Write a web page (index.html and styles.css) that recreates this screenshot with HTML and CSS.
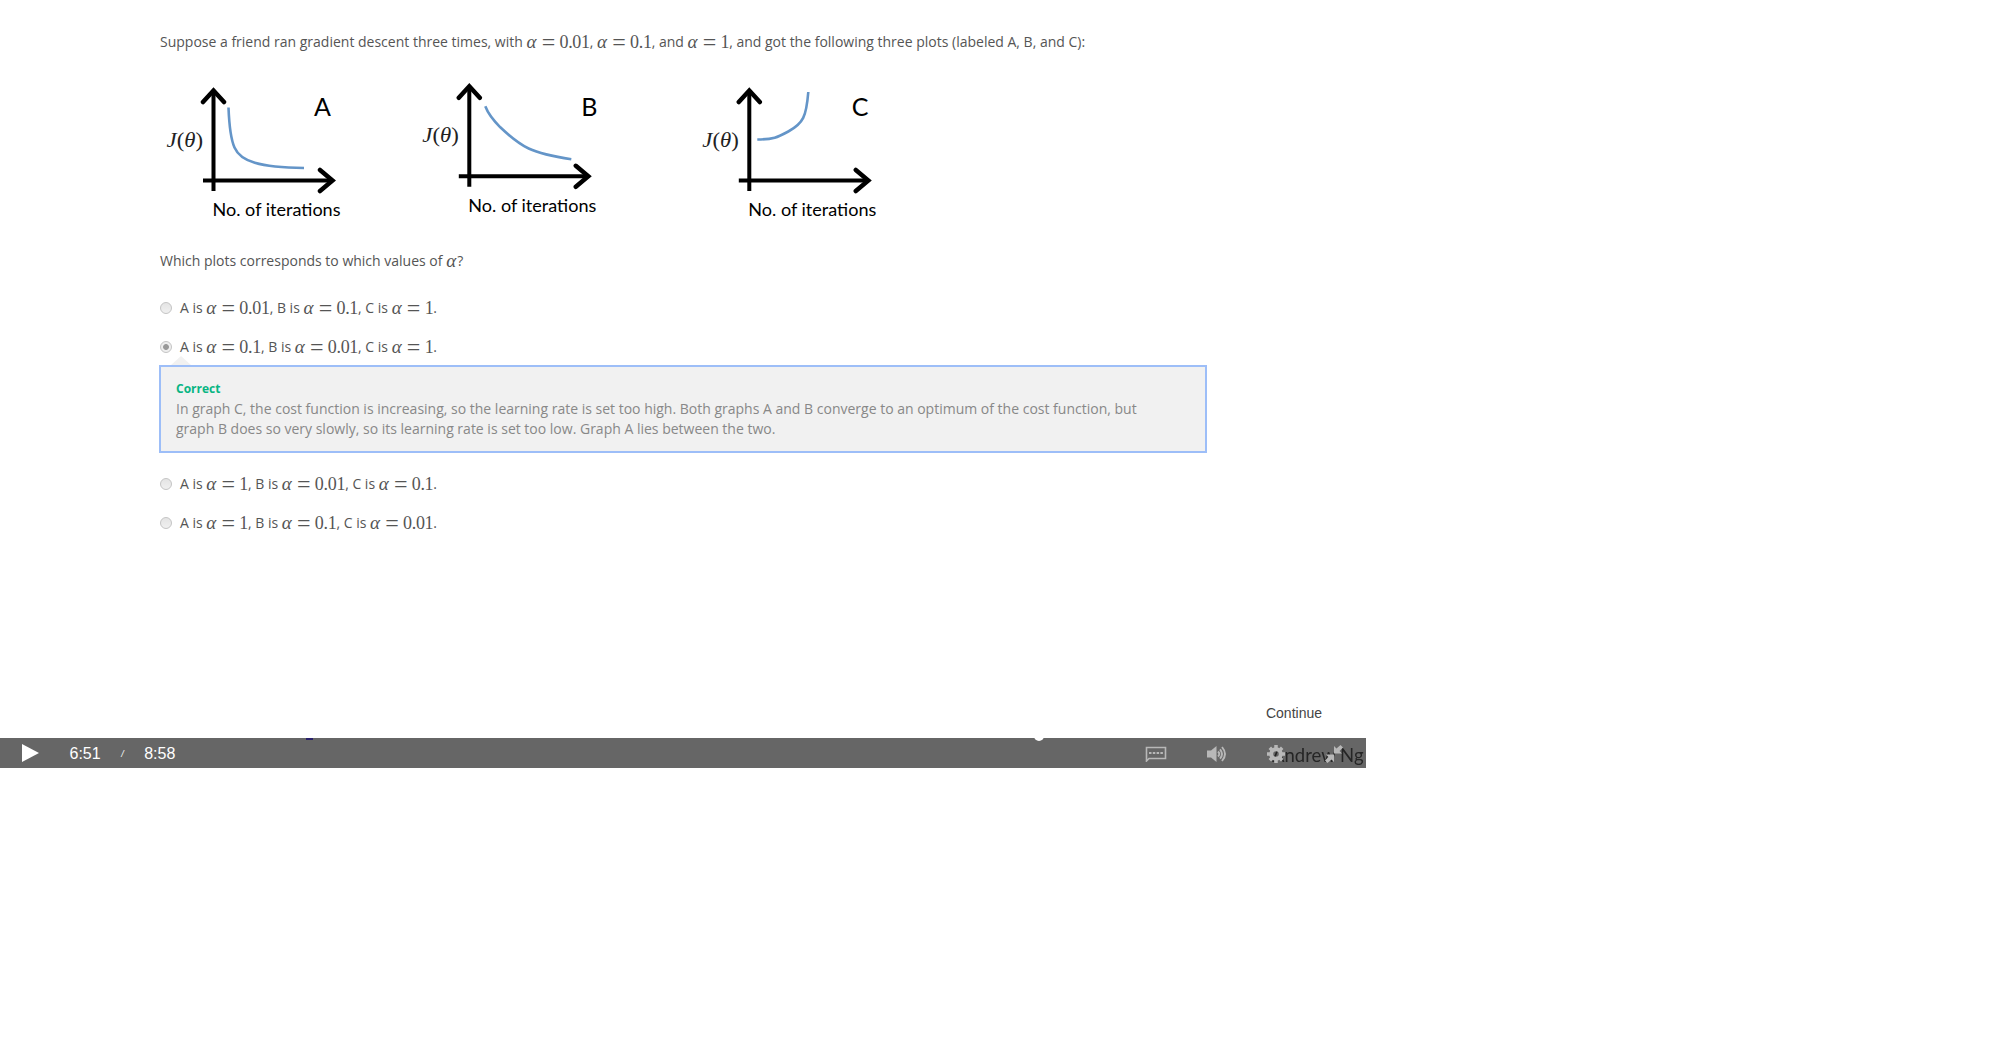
FILE: index.html
```html
<!DOCTYPE html>
<html lang="en">
<head>
<meta charset="utf-8">
<title>Gradient descent quiz</title>
<link rel="stylesheet" href="styles.css">
</head>
<body>
<main class="player">
  <section class="quiz">
    <p class="prompt"><span class="lead">Suppose a friend ran gradient descent three times, with </span><span class="math"><i>α</i><b>=</b><span>0.01</span></span>, <span class="math"><i>α</i><b>=</b><span>0.1</span></span>, and <span class="math"><i>α</i><b>=</b><span>1</span></span>, and got the following three plots (labeled A, B, and C):</p>

    <div class="plots">
      <svg width="240" height="145" viewBox="-53.5 -100.5 240 145">
        <defs>
          <g id="axes">
            <path class="axis" d="M0 10.5V-89M-10.5 0H118"/>
            <path class="axis tip" d="M-10.5 -78.5L0 -90L10.5 -78.5M106.5 -10.5L119 0L106.5 10.5"/>
          </g>
        </defs>
        <use href="#axes"/>
        <path class="curve" d="M15 -73C15.5 -60 17 -42 21 -33C27 -19 46 -13 90.500 -12.500"/>
        <text class="cost" x="-47" y="-34" textLength="36.500" lengthAdjust="spacingAndGlyphs"><tspan class="it">J</tspan>(<tspan class="it">θ</tspan>)</text>
        <text class="name" x="100.500" y="-65">A</text>
        <text class="label" x="-1" y="35.500" textLength="128" lengthAdjust="spacingAndGlyphs">No. of iterations</text>
      </svg>
      <svg width="280" height="145" viewBox="-69.3 -96.3 280 145">
        <use href="#axes"/>
        <path class="curve" d="M16 -70C19 -62 24 -56 31 -49C52 -29 62 -23 102 -17"/>
        <text class="cost" x="-47" y="-34" textLength="36.500" lengthAdjust="spacingAndGlyphs"><tspan class="it">J</tspan>(<tspan class="it">θ</tspan>)</text>
        <text class="name" x="112" y="-60.500">B</text>
        <text class="label" x="-1" y="35.500" textLength="128" lengthAdjust="spacingAndGlyphs">No. of iterations</text>
      </svg>
      <svg width="240" height="145" viewBox="-69.3 -100.5 240 145">
        <use href="#axes"/>
        <path class="curve" d="M8 -41C24 -41 28 -43 39 -49C54 -57 57 -64 59 -88.500"/>
        <text class="cost" x="-47" y="-34" textLength="36.500" lengthAdjust="spacingAndGlyphs"><tspan class="it">J</tspan>(<tspan class="it">θ</tspan>)</text>
        <text class="name" x="102.500" y="-64.500">C</text>
        <text class="label" x="-1" y="35.500" textLength="128" lengthAdjust="spacingAndGlyphs">No. of iterations</text>
      </svg>
    </div>

    <p class="question">Which plots corresponds to which values of <span class="math"><i>α</i></span>?</p>

    <div class="option"><span class="radio"></span><p>A is <span class="math"><i>α</i><b>=</b><span>0.01</span></span>, B is <span class="math"><i>α</i><b>=</b><span>0.1</span></span>, C is <span class="math"><i>α</i><b>=</b><span>1</span></span>.</p></div>
    <div class="option"><span class="radio checked"></span><p>A is <span class="math"><i>α</i><b>=</b><span>0.1</span></span>, B is <span class="math"><i>α</i><b>=</b><span>0.01</span></span>, C is <span class="math"><i>α</i><b>=</b><span>1</span></span>.</p></div>
    <div class="feedback">
      <h2>Correct</h2>
      <p>In graph C, the cost function is increasing, so the learning rate is set too high. Both graphs A and B converge to an optimum of the cost function, but<br>graph B does so very slowly, so its learning rate is set too low. Graph A lies between the two.</p>
    </div>
    <div class="option"><span class="radio"></span><p>A is <span class="math"><i>α</i><b>=</b><span>1</span></span>, B is <span class="math"><i>α</i><b>=</b><span>0.01</span></span>, C is <span class="math"><i>α</i><b>=</b><span>0.1</span></span>.</p></div>
    <div class="option"><span class="radio"></span><p>A is <span class="math"><i>α</i><b>=</b><span>1</span></span>, B is <span class="math"><i>α</i><b>=</b><span>0.1</span></span>, C is <span class="math"><i>α</i><b>=</b><span>0.01</span></span>.</p></div>
  </section>

  <div class="actions"><span>Continue</span></div>

  <footer class="controls">
    <svg class="play" width="17" height="18" viewBox="0 0 17 18"><path fill="#fff" d="M0 0L17 9L0 18z"/></svg>
    <span class="time now">6:51</span><span class="slash">/</span><span class="time">8:58</span>
    <span class="knob"></span><span class="ink"></span>
    <span class="credit">Andrew Ng</span>
    <div class="icons">
      <svg width="22" height="16" viewBox="0 0 22 16"><path fill="none" stroke="#b8b8b8" stroke-width="1.600" d="M1.500 15V1.500H20.500V12.500H4z"/><path stroke="#b8b8b8" stroke-width="2" stroke-dasharray="2.500 1.300" d="M4 7H18"/></svg>
      <svg width="20" height="16" viewBox="0 0 20 16"><path fill="#b8b8b8" d="M0 4.500H4L9.500 0V16L4 11.500H0z"/><path fill="none" stroke="#b8b8b8" stroke-width="1.900" d="M11 5.500Q13.500 8 11 10.500M13 3.300Q17 8 13 12.700M15 1Q21 8 15 15"/></svg>
      <svg width="18" height="18" viewBox="-9 -9 18 18"><circle r="4.800" fill="none" stroke="#b8b8b8" stroke-width="4"/><path stroke="#b8b8b8" stroke-width="3.500" d="M0 -9V-6M0 6V9M-9 0H-6M6 0H9M-6.200 -6.200L-4 -4M6.200 6.200L4 4M-6.200 6.200L-4 4M6.200 -6.200L4 -4"/></svg>
      <svg width="18" height="18" viewBox="0 0 18 18"><path fill="#b8b8b8" d="M9 1L11.500 3.500L15.500 0L18 2.500L14.500 6L17 8.500H9zM9 17L6.500 14.500L2.500 18L0 15.500L3.500 12L1 9.500H9z"/></svg>
    </div>
  </footer>
</main>
</body>
</html>
```
FILE: styles.css
```css
* { box-sizing: border-box; }
body { margin: 0; background: #fff; font: 14px/20px "Open Sans", sans-serif; color: #555; }
p, h2 { margin: 0; }
.player { width: 1366px; height: 768px; display: flex; flex-direction: column; overflow: hidden; }
.quiz { padding: 32px 158px 0 160px; flex: 1; }
.prompt, .question { height: 20px; white-space: nowrap; }
.math { display: inline-block; height: 20px; vertical-align: top; font: 17px/20px "Liberation Serif", serif; white-space: nowrap; }
.math > * { display: inline-block; height: 20px; vertical-align: top; font-weight: normal; }
.math i { width: 11px; font-size: 19px; }
.math b { width: 22px; text-align: center; font-size: 24px; }
.math span { font-size: 18px; letter-spacing: -0.300px; }

.plots { display: flex; margin-top: 28px; height: 145px; }
.plots svg { display: block; }
.axis { fill: none; stroke: #000; stroke-width: 4; }
.tip { stroke-width: 4.500; stroke-linecap: round; }
.curve { fill: none; stroke: #6495c8; stroke-width: 2.600; }
.cost { font: 20px "Liberation Serif", serif; fill: #222; }
.it { font-style: italic; }
.name { font: 25px Lato, sans-serif; fill: #000; }
.label { font: 17.500px Lato, sans-serif; fill: #000; }
.question { margin-top: 26px; }

.option { display: flex; align-items: center; gap: 8px; height: 20px; margin-top: 19px; white-space: nowrap; }
.question + .option { margin-top: 27px; }
.radio { width: 12px; height: 12px; border: 1px solid #c4c4c4; border-radius: 50%; background: linear-gradient(#e4e4e4, #f0f0f0); }
.checked { background: radial-gradient(circle, #999 0 2.500px, #eee 3.300px); }
.feedback { position: relative; width: 1048px; height: 88px; margin: 8px 0 0 -1px; padding: 12px 15px; border: 2px solid #9dbef8; background: #f1f1f1; color: #888; white-space: nowrap; }
.feedback::before { content: ""; position: absolute; left: 10px; top: -11px; border: 10px solid transparent; border-top: 0; border-bottom: 9px solid #f1f1f1; }
.feedback h2 { font-size: 12px; line-height: 20px; color: #08b583; }
.feedback + .option { margin-top: 21px; }

.actions { height: 35px; display: flex; justify-content: flex-end; padding-right: 44px; font: 14px/20px "Liberation Sans", sans-serif; color: #444; }
.controls { position: relative; height: 30px; display: flex; align-items: center; background: #666; overflow: hidden; padding-left: 22px; color: #fff; font: 16px/30px "Liberation Sans", sans-serif; }
.time, .slash { padding-top: 1px; }
.now { margin-left: 30.500px; }
.slash { width: 43.500px; text-align: center; font-size: 9px; font-style: italic; }
.knob { position: absolute; left: 1034px; top: -7px; width: 10px; height: 10px; border-radius: 50%; background: #fff; }
.ink { position: absolute; left: 306px; top: 0; width: 7px; height: 2px; background: #29206a; }
.credit { position: absolute; left: 1272px; top: 2px; font: 18.500px/30px Lato, sans-serif; color: #252525; filter: blur(0.600px); }
.icons { position: relative; display: flex; align-items: center; gap: 40px; margin-left: auto; padding: 1px 23px 0 0; }
```
